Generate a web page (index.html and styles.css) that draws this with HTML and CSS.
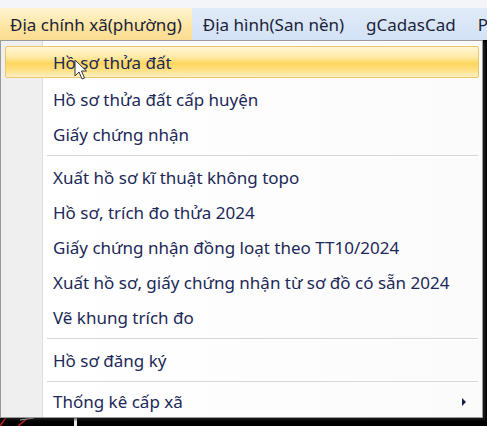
FILE: index.html
```html
<!DOCTYPE html>
<html lang="vi">
<head>
    <meta charset="UTF-8">
    <title>Địa chính xã(phường)</title>
    <link rel="stylesheet" href="styles.css">
</head>
<body>
    <div class="top-strip"></div>

    <div class="menubar">
        <div class="menubar-item active">Địa chính xã(phường)</div>
        <div class="menubar-item">Địa hình(San nền)</div>
        <div class="menubar-item">gCadasCad</div>
        <div class="menubar-item">P</div>
    </div>

    <div class="canvas">
        <svg class="canvas-lines" width="120" height="20" viewBox="0 0 120 20">
            <line x1="0" y1="20" x2="14" y2="0" stroke="#c0221e" stroke-width="1.5"/>
            <line x1="18" y1="20" x2="40" y2="2" stroke="#c0221e" stroke-width="1.5"/>
            <line x1="20" y1="14" x2="34" y2="12" stroke="#e6e6e6" stroke-width="1"/>
            <rect x="74" y="0" width="3" height="20" fill="#e8e8e8"/>
        </svg>

        <div class="dropdown">
            <div class="item hover">Hồ sơ thửa đất</div>
            <div class="item">Hồ sơ thửa đất cấp huyện</div>
            <div class="item">Giấy chứng nhận</div>
            <div class="separator"></div>
            <div class="item">Xuất hồ sơ kĩ thuật không topo</div>
            <div class="item">Hồ sơ, trích đo thửa 2024</div>
            <div class="item">Giấy chứng nhận đồng loạt theo TT10/2024</div>
            <div class="item">Xuất hồ sơ, giấy chứng nhận từ sơ đồ có sẵn 2024</div>
            <div class="item">Vẽ khung trích đo</div>
            <div class="separator"></div>
            <div class="item">Hồ sơ đăng ký</div>
            <div class="separator"></div>
            <div class="item last">
                Thống kê cấp xã
                <span class="submenu-arrow"></span>
            </div>
        </div>

        <!-- con tro chuot -->
        <svg class="cursor" width="14" height="22" viewBox="0 0 14 22">
            <path d="M1 1 L1 17 L5 13 L8 20 L10.5 19 L7.5 12 L12.5 12 Z" fill="#fff" stroke="#333" stroke-width="1" stroke-linejoin="round"/>
        </svg>
    </div>
</body>
</html>
```

FILE: styles.css
```css
body {
    margin: 0;
    padding: 0;
    width: 487px;
    height: 426px;
    overflow: hidden;
    background-color: #000;
    font-family: 'Noto Sans', 'Open Sans', sans-serif;
    font-size: 17px;
    color: #1c2858;
}

.top-strip {
    height: 8px;
    background-color: #f3f5f8;
}

.menubar {
    display: flex;
    height: 32px;
    align-items: center;
    background: linear-gradient(to bottom, #e1ebf8, #d3e2f5);
    color: #1a1f3a;
}

.menubar-item {
    height: 100%;
    display: flex;
    align-items: center;
    padding: 0 11px;
    white-space: nowrap;
}

.menubar-item.active {
    padding: 0 10px;
    background: linear-gradient(to bottom, #fff4d2, #fde4a0 60%, #fbdc92);
}

.canvas {
    position: relative;
    height: 386px;
    background-color: #000;
}

.canvas-lines {
    position: absolute;
    left: 0;
    bottom: 0;
}

.dropdown {
    position: absolute;
    top: 0;
    left: 0;
    width: 481px;
    padding: 4px 0 0 0;
    border: 1px solid #9a9a9a;
    box-shadow: 3px 2px 2px rgba(40, 40, 40, 0.6);
    background: linear-gradient(to right, #efefef 0, #efefef 41px, #dcdcdc 41px, #dcdcdc 42px, #fff 42px, #fbfbfb 100%);
}

.item {
    position: relative;
    height: 35px;
    display: flex;
    align-items: center;
    padding-left: 52px;
    white-space: nowrap;
}

.item.hover {
    height: 30px;
    margin: 1px 3px 4px 4px;
    padding-left: 47px;
    border: 1px solid #ecc66b;
    border-radius: 2px;
    background: linear-gradient(to bottom, #fff6d6 0%, #ffe9a2 35%, #ffd75e 55%, #ffe28a 80%, #fff1c4 100%);
}

.item.last {
    height: 31px;
}

.separator {
    height: 8px;
    margin: 0 4px 0 46px;
    background: linear-gradient(to bottom, transparent 3px, #d6d6d6 3px, #d6d6d6 4px, #fff 4px, #fff 5px, transparent 5px);
}

.submenu-arrow {
    position: absolute;
    right: 16px;
    top: 12px;
    width: 0;
    height: 0;
    border-top: 4px solid transparent;
    border-bottom: 4px solid transparent;
    border-left: 4px solid #1a1f4a;
}

.cursor {
    position: absolute;
    left: 74px;
    top: 19px;
}
```
